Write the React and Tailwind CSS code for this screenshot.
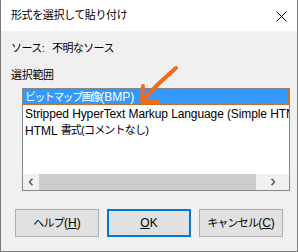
export default function App() {
  const font = { fontFamily: '"Liberation Sans", "Noto Sans CJK JP", sans-serif' };
  return (
    <div
      className="relative w-[298px] h-[252px] bg-[#f0f0f0] border-x border-b border-[#7a7a7a] text-[12px] text-black overflow-hidden"
      style={font}
    >
      {/* title bar */}
      <div className="h-[31px] bg-white flex items-center justify-between pl-[10px] pr-[10px]">
        <span className="leading-none text-[11px] tracking-[-0.4px]">形式を選択して貼り付け</span>
        <svg width="11" height="11" viewBox="0 0 11 11" className="mt-[1px]">
          <path d="M0.5 0.5 L10.5 10.5 M10.5 0.5 L0.5 10.5" stroke="#000" strokeWidth="1" />
        </svg>
      </div>

      <div className="px-[10px]">
        <div className="flex h-[16px] mt-[9px] items-center leading-none text-[11px] tracking-[-0.6px]">
          <span className="w-[41px]">ソース:</span>
          <span>不明なソース</span>
        </div>
        <div className="mt-[11px] h-[16px] leading-none flex items-center text-[11px] tracking-[-0.3px]">
          選択範囲
        </div>

        {/* list box */}
        <div className="ml-[11px] mt-[5px] w-[268px] h-[103px] border border-[#828790] bg-white flex flex-col">
          <div className="flex-1 overflow-hidden">
            <div className="h-[16px] bg-[#3399ff] text-white border border-dotted border-[#c9691f] flex items-center pl-[1px] leading-none whitespace-nowrap">
              <span className="text-[11px] tracking-[-1.6px]">ビットマップ画像</span>(BMP)
            </div>
            <div className="h-[17px] flex items-center pl-[2px] leading-none whitespace-nowrap tracking-[-0.1px]">
              Stripped HyperText Markup Language (Simple HTML)
            </div>
            <div className="h-[17px] flex items-center pl-[2px] leading-none whitespace-nowrap">
              HTML <span className="text-[11px] tracking-[-0.8px] ml-[3px]">書式(コメントなし)</span>
            </div>
          </div>
          {/* horizontal scrollbar */}
          <div className="h-[16px] bg-[#f0f0f0] flex items-stretch">
            <div className="w-[16px] flex items-center justify-center">
              <svg width="6" height="8" viewBox="0 0 6 8">
                <path d="M4.5 0.8 L1.5 4 L4.5 7.2" stroke="#606060" strokeWidth="1.6" fill="none" />
              </svg>
            </div>
            <div className="w-[217px] bg-[#cdcdcd]" />
            <div className="flex-1 flex items-center justify-center">
              <svg width="6" height="8" viewBox="0 0 6 8">
                <path d="M1.5 0.8 L4.5 4 L1.5 7.2" stroke="#606060" strokeWidth="1.6" fill="none" />
              </svg>
            </div>
          </div>
        </div>
      </div>

      {/* buttons */}
      <div className="flex gap-[8px] pl-[14px] mt-[18px]">
        <button className="w-[84px] h-[28px] bg-[#e1e1e1] border border-[#adadad] flex items-center justify-center leading-none">
          <span className="text-[11px] tracking-[-0.8px]">ヘルプ</span>(<span className="underline">H</span>)
        </button>
        <button className="w-[84px] h-[28px] bg-[#e1e1e1] border-2 border-[#0078d7] flex items-center justify-center leading-none">
          <span className="underline">O</span>K
        </button>
        <button className="w-[84px] h-[28px] bg-[#e1e1e1] border border-[#adadad] flex items-center justify-center leading-none">
          <span className="text-[11px] tracking-[-0.8px]">キャンセル</span>(<span className="underline">C</span>)
        </button>
      </div>

      {/* orange annotation arrow */}
      <svg className="absolute left-0 top-0" width="298" height="252" viewBox="0 0 298 252">
        <path
          d="M175 68 C168 74 158 82 142 100 M142 86 L141 101 L157 102"
          stroke="#f26b1d"
          strokeWidth="4"
          fill="none"
          strokeLinecap="round"
          strokeLinejoin="round"
        />
      </svg>
    </div>
  );
}
